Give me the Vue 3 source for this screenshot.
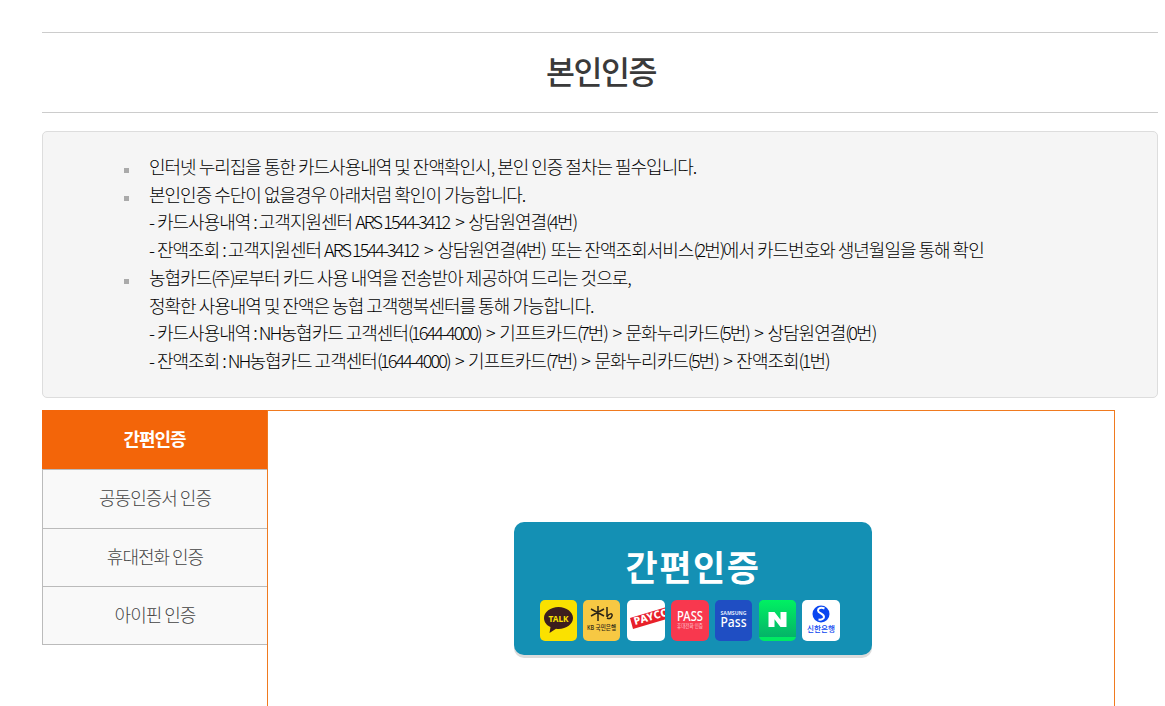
<script setup>
const raw = [
  ['인터넷 누리집을 통한 카드사용내역 및 잔액확인시, 본인 인증 절차는 필수입니다.'],
  ['본인인증 수단이 없을경우 아래처럼 확인이 가능합니다.', '- 카드사용내역 : 고객지원센터 ARS 1544-3412 > 상담원연결(4번)', '- 잔액조회 : 고객지원센터 ARS 1544-3412 > 상담원연결(4번) 또는 잔액조회서비스(2번)에서 카드번호와 생년월일을 통해 확인'],
  ['농협카드(주)로부터 카드 사용 내역을 전송받아 제공하여 드리는 것으로,', '정확한 사용내역 및 잔액은 농협 고객행복센터를 통해 가능합니다.', '- 카드사용내역 : NH농협카드 고객센터(1644-4000) > 기프트카드(7번) > 문화누리카드(5번) > 상담원연결(0번)', '- 잔액조회 : NH농협카드 고객센터(1644-4000) > 기프트카드(7번) > 문화누리카드(5번) > 잔액조회(1번)']
]
// Latin runs and digits are set tighter than Hangul; ">" keeps wider gaps.
const classOf = (text, prev) => {
  if (text === '>') return 'gt'
  if (text === '(' || text === ')') return 'par'
  if (text === ':') return 'colon'
  if (prev === ')' && /^ \S/.test(text)) return 'after'
  return /^[A-Za-z0-9]/.test(text) ? 'lat' : ''
}
const tokenize = (line) =>
  line.split(/([A-Za-z0-9][A-Za-z0-9 -]*[A-Za-z0-9]|[0-9()]|>|:)/).filter(Boolean).map((text, i, all) => ({ text, cls: classOf(text, all[i - 1]) }))
const notes = raw.map((lines) => lines.map(tokenize))
const tabs = ['간편인증', '공동인증서 인증', '휴대전화 인증', '아이핀 인증']
</script>

<template>
  <div class="page">
    <h1 class="title">본인인증</h1>
    <div class="notice">
      <ul>
        <li v-for="(n, i) in notes" :key="i">
          <div v-for="(l, j) in n" :key="j"><span v-for="(s, k) in l" :key="k" :class="s.cls">{{ s.text }}</span></div>
        </li>
      </ul>
    </div>
    <div class="auth">
      <nav class="tabs">
        <a v-for="(t, i) in tabs" :key="t" class="tab" :class="{ active: i === 0 }">{{ t }}</a>
      </nav>
      <section class="panel">
        <div class="card">
          <div class="card-title">간편인증</div>
          <div class="icons">
            <svg class="ic w37" viewBox="0 0 37 41">
              <rect width="37" height="41" rx="5" fill="#fae100" />
              <path d="M18.500 7C10.500 7 4 12 4 18c0 4 2.500 7.300 6.500 9.100L9.500 33l6.500-4.300c.8.100 1.700.200 2.500.200 8 0 14.500-5 14.500-10.900S26.500 7 18.500 7z" fill="#3c1e1e" />
              <text x="18.500" y="22" class="t talk" textLength="20" lengthAdjust="spacingAndGlyphs">TALK</text>
            </svg>
            <svg class="ic w37" viewBox="0 0 37 41">
              <rect width="37" height="41" rx="5" fill="#f7c843" />
              <path d="M15 6v15M8 9l13 7M8 16l13-7M24 7v10M24 17c2-4 6-4 5-1s-3 3-5 2" fill="none" stroke="#2b2416" stroke-width="1.500" />
              <text x="18.500" y="30" class="t kb" textLength="29" lengthAdjust="spacingAndGlyphs">KB 국민은행</text>
            </svg>
            <svg class="ic w38" viewBox="0 0 38 41">
              <rect width="38" height="41" rx="5" fill="#fff" />
              <path d="M3 18 38 7.500V19.500L6 29z" fill="#e8202a" />
              <text transform="translate(8 25) rotate(-16)" class="t payco">PAYCO</text>
            </svg>
            <svg class="ic w38" viewBox="0 0 38 41">
              <rect width="38" height="41" rx="6" fill="#f8384e" />
              <text x="19" y="20.500" class="t pass" textLength="26" lengthAdjust="spacingAndGlyphs">PASS</text>
              <text x="19" y="27.500" class="t passsub" textLength="26" lengthAdjust="spacingAndGlyphs">휴대전화 인증</text>
            </svg>
            <svg class="ic w37" viewBox="0 0 37 41">
              <rect width="37" height="41" rx="5" fill="#1f4ec3" />
              <text x="18.500" y="15" class="t sam" textLength="26" lengthAdjust="spacingAndGlyphs">SAMSUNG</text>
              <text x="18.500" y="27" class="t sp" textLength="26" lengthAdjust="spacingAndGlyphs">Pass</text>
            </svg>
            <svg class="ic w37" viewBox="0 0 37 41">
              <defs>
                <linearGradient id="ng" x1="0" y1="0" x2="0" y2="1">
                  <stop offset="0" stop-color="#00f162" />
                  <stop offset="1" stop-color="#04b368" />
                </linearGradient>
              </defs>
              <rect width="37" height="41" rx="5" fill="#00ea63" />
              <path d="M0 5a5 5 0 0 1 5-5h27a5 5 0 0 1 5 5v32H0z" fill="url(#ng)" />
              <path d="M9.500 12h6l6 7.800V12H27.500v15h-6l-6-7.800V27H9.500z" fill="#fff" />
            </svg>
            <svg class="ic w38" viewBox="0 0 38 41">
              <rect width="38" height="41" rx="5" fill="#fff" />
              <circle cx="19" cy="14" r="8.500" fill="#0a46f0" />
              <path d="M22.500 8.500c-3.500-1.500-6.500-.5-6.500 2 0 3 6 3 6 6.500 0 2-2.500 3-5.500 2.500" fill="none" stroke="#fff" stroke-width="2" />
              <text x="19" y="32" class="t sh" textLength="28" lengthAdjust="spacingAndGlyphs">신한은행</text>
            </svg>
          </div>
        </div>
      </section>
    </div>
  </div>
</template>

<style>
html, body { margin: 0; overflow: hidden; background: #fff; }
</style>

<style scoped>
.page {
  box-sizing: border-box;
  width: 1165px;
  height: 706px;
  overflow: hidden;
  padding: 32px 7px 0 42px;
  font-family: "Noto Sans CJK KR", "Noto Sans", sans-serif;
  font-weight: 300;
}
.title {
  margin: 0;
  height: 79px;
  line-height: 74px;
  padding-left: 2px;
  border-top: 1px solid #ccc;
  border-bottom: 1px solid #ccc;
  text-align: center;
  font-size: 31.500px;
  font-weight: 500;
  letter-spacing: -1.500px;
  color: #3a3a3a;
}
.notice {
  box-sizing: border-box;
  height: 267px;
  margin-top: 18px;
  background: #f5f5f5;
  border: 1px solid #ddd;
  border-radius: 5px;
  padding: 21px 0 0;
}
ul {
  margin: 0;
  padding: 0 0 0 106px;
  list-style: none;
  color: #000;
  font-size: 18px;
  line-height: 27.700px;
  letter-spacing: -1px;
}
li { position: relative; }
li::before {
  content: "";
  position: absolute;
  left: -25px;
  top: 15px;
  width: 5px;
  height: 5px;
  background: #aaa;
}
.lat { letter-spacing: -1.900px; }
.par { letter-spacing: -2.600px; }
.gt { margin: 0 .5px 0 3px; letter-spacing: 0; }
.colon { letter-spacing: -2px; }
.after { margin-left: 3px; }
.auth {
  display: flex;
  margin-top: 12px;
  width: 1073px;
}
.tabs {
  flex: 0 0 225px;
  display: flex;
  flex-direction: column;
}
.tab {
  box-sizing: border-box;
  height: 58.330px;
  line-height: 55px;
  text-align: center;
  background: #f9f9f9;
  border-left: 1px solid #bbb;
  border-bottom: 1px solid #bbb;
  color: #444;
  font-size: 18px;
  letter-spacing: -1px;
}
.tab.active {
  height: 60.300px;
  line-height: 56px;
  background: #f36509;
  border-left: 0;
  color: #fff;
  font-weight: 700;
}
.panel {
  flex: 1;
  box-sizing: border-box;
  height: 500px;
  border: 1px solid #f07a1f;
  padding: 111px 0 0 246px;
  background: #fff;
}
.card {
  box-sizing: border-box;
  width: 358px;
  height: 133px;
  background: #1490b4;
  border-radius: 10px;
  box-shadow: 0 3px 0 #dcdcdc;
  padding-top: 20px;
}
.card-title {
  text-align: center;
  color: #fff;
  font-size: 35px;
  font-weight: 700;
  line-height: 48px;
  letter-spacing: 1.500px;
}
.icons {
  display: flex;
  justify-content: center;
  gap: 6.400px;
  margin-top: 10px;
  padding-right: 6px;
}
.ic { height: 41px; display: block; flex: none; }
.w37 { width: 37px; }
.w38 { width: 38px; }
.t { font-family: "Noto Sans", "Noto Sans CJK KR", sans-serif; text-anchor: middle; }
.talk { font-size: 9.500px; font-weight: 700; fill: #fae100; }
.kb { font-size: 6.500px; font-weight: 500; fill: #2b2416; }
.payco { font-size: 10.500px; font-weight: 800; fill: #fff; text-anchor: start; letter-spacing: .4px; }
.pass { font-size: 14px; font-weight: 500; fill: #fff; }
.passsub { font-size: 5.500px; fill: #fff; }
.sam { font-size: 5px; font-weight: 700; fill: #dfe6fb; }
.sp { font-size: 14px; font-weight: 500; fill: #fff; }
.sh { font-size: 8px; font-weight: 500; fill: #0a46f0; }
</style>
